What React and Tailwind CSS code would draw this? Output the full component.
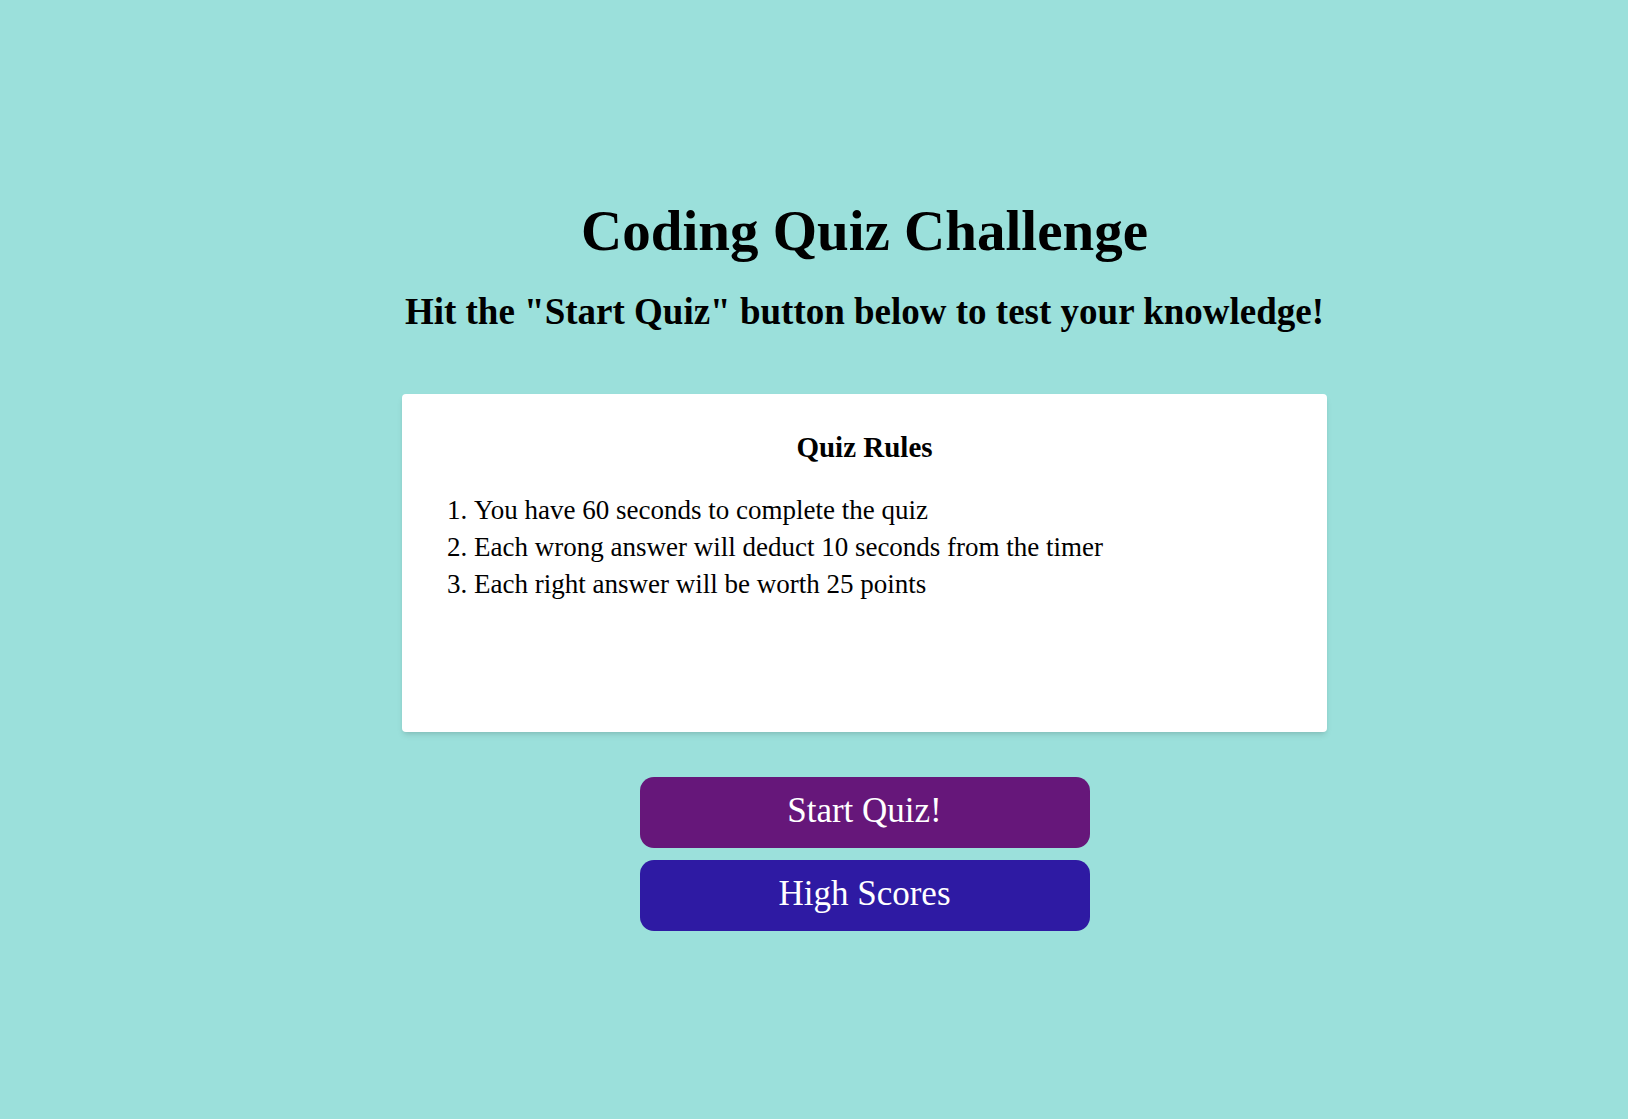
export default function App() {
  return (
    <div className="min-h-screen bg-[#9be0db] text-black font-['Liberation_Serif',serif]">
      <div className="ml-[402px] flex w-[925px] flex-col items-center pt-[197px] pb-10">
        <h1 className="whitespace-nowrap text-[57px] font-bold leading-[67px]">Coding Quiz Challenge</h1>
        <h2 className="mt-[26px] whitespace-nowrap text-[37px] font-bold leading-[44px]">
          Hit the "Start Quiz" button below to test your knowledge!
        </h2>

        <section className="mt-[60px] h-[338px] w-full rounded bg-white px-[45px] pt-[36px] shadow-md">
          <h3 className="text-center text-[29px] font-bold leading-[34px]">Quiz Rules</h3>
          <ol className="mt-[28px] list-inside list-decimal text-[27px] leading-[37px]">
            <li>You have 60 seconds to complete the quiz</li>
            <li>Each wrong answer will deduct 10 seconds from the timer</li>
            <li>Each right answer will be worth 25 points</li>
          </ol>
        </section>

        <div className="mt-[45px] flex flex-col gap-3">
          <button className="flex h-[71px] w-[450px] items-center justify-center rounded-[14px] bg-[#66177a] pb-[4px] text-[35px] leading-none text-white">
            Start Quiz!
          </button>
          <button className="flex h-[71px] w-[450px] items-center justify-center rounded-[14px] bg-[#2e1aa3] pb-[4px] text-[35px] leading-none text-white">
            High Scores
          </button>
        </div>
      </div>
    </div>
  );
}
